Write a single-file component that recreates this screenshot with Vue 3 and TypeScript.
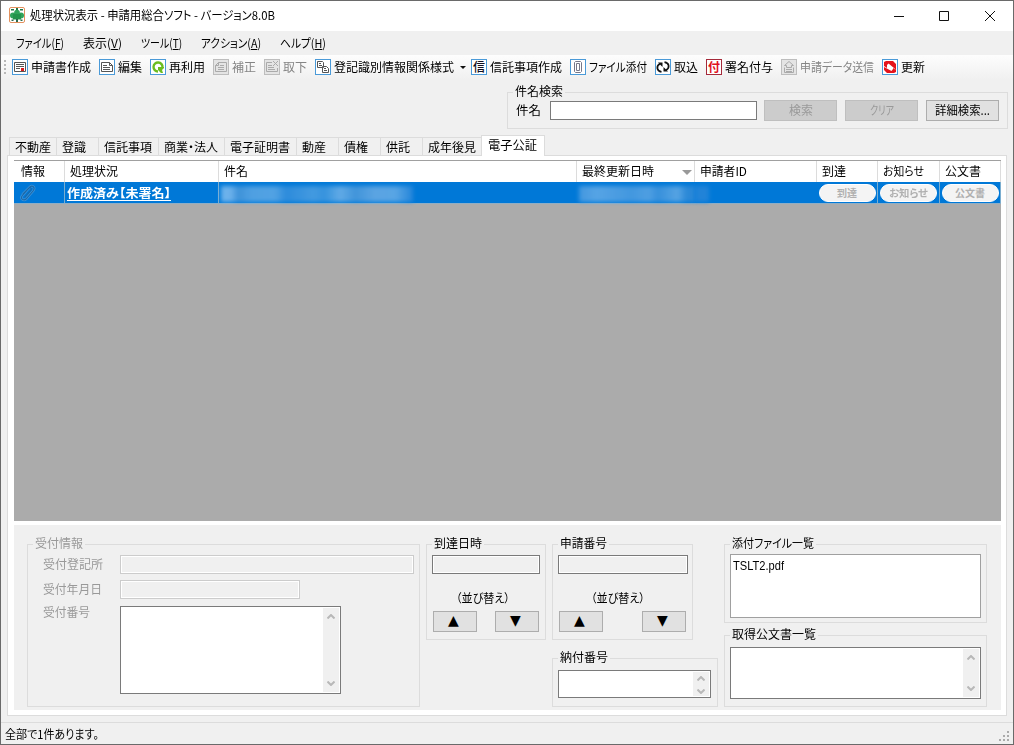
<script setup lang="ts">
interface Tool { icon: string; label: string; w: number; off?: boolean; drop?: boolean }

const fit = (el: HTMLElement, binding: { value: number }) => {
  el.style.transform = ''
  el.style.marginRight = ''
  const natural = el.getBoundingClientRect().width
  if (!natural) return
  el.style.transform = `scaleX(${binding.value / natural})`
  el.style.marginRight = `${binding.value - natural}px`
}
const vFit = { mounted: fit }

const menus = [
  { t: 'ファイル', k: 'F', w: 48 },
  { t: '表示', k: 'V', w: 39 },
  { t: 'ツール', k: 'T', w: 41 },
  { t: 'アクション', k: 'A', w: 60 },
  { t: 'ヘルプ', k: 'H', w: 46 },
]

const tools: Tool[] = [
  { icon: 'form', label: '申請書作成', w: 60 },
  { icon: 'edit', label: '編集', w: 24 },
  { icon: 'reuse', label: '再利用', w: 36 },
  { icon: 'fix', label: '補正', w: 24, off: true },
  { icon: 'withdraw', label: '取下', w: 24, off: true },
  { icon: 'copy', label: '登記識別情報関係様式', w: 120, drop: true },
  { icon: 'trust', label: '信託事項作成', w: 72 },
  { icon: 'clip', label: 'ファイル添付', w: 58 },
  { icon: 'import', label: '取込', w: 24 },
  { icon: 'sign', label: '署名付与', w: 48 },
  { icon: 'send', label: '申請データ送信', w: 74, off: true },
  { icon: 'refresh', label: '更新', w: 24 },
]

const tabs = [
  { t: '不動産', w: 36, box: 47 },
  { t: '登識', w: 24, box: 42 },
  { t: '信託事項', w: 48, box: 60 },
  { t: '商業・法人', w: 54, box: 66 },
  { t: '電子証明書', w: 60, box: 72 },
  { t: '動産', w: 24, box: 42 },
  { t: '債権', w: 24, box: 42 },
  { t: '供託', w: 24, box: 42 },
  { t: '成年後見', w: 48, box: 59 },
]

const heads = [
  { t: '情報', w: 24 }, { t: '処理状況', w: 48 }, { t: '件名', w: 24 },
  { t: '最終更新日時', w: 72, sort: true }, { t: '申請者ID', w: 47 },
  { t: '到達', w: 24 }, { t: 'お知らせ', w: 41 }, { t: '公文書', w: 36 },
]
const pills = [{ t: '到達', w: 20 }, { t: 'お知らせ', w: 39 }, { t: '公文書', w: 30 }]
</script>

<template>
  <div class="window">
    <header class="title">
      <svg class="logo" viewBox="0 0 16 16">
        <rect x=".5" y=".5" width="15" height="15" rx="1.5" fill="#fff" stroke="#e3915e" />
        <path d="M2 2h3v1.500H2zM11 2h3v1.500h-3zM7 1h2v2H7z" fill="#1d7446" />
        <circle cx="8" cy="5.500" r="2.800" fill="#2fa35a" />
        <circle cx="4" cy="8.500" r="3" fill="#2fa35a" /><circle cx="12" cy="8.500" r="3" fill="#2fa35a" />
        <path d="M4 7h8v5.500H4z" fill="#23924b" />
        <path d="M2.500 12.500h2v1.500h-2zM11.500 12.500h2v1.500h-2zM7 12h2v3H7z" fill="#2b6a4c" />
      </svg>
      <span v-fit="245" class="t">処理状況表示 - 申請用総合ソフト - バージョン8.0B</span>
      <svg class="controls" viewBox="0 0 104 14" fill="none" stroke="#111">
        <path d="M0 7.500h10M45.500 2.500h9v9h-9z" /><path d="M91 2l10 10M101 2L91 12" />
      </svg>
    </header>

    <nav class="menu">
      <span v-for="m in menus" :key="m.k" v-fit="m.w" class="t">{{ m.t }}(<u>{{ m.k }}</u>)</span>
    </nav>

    <div class="toolbar">
      <i class="grip"><b v-for="n in 4" :key="n" /></i>
      <div v-for="tool in tools" :key="tool.icon" class="tool" :class="{ off: tool.off }">
        <svg viewBox="0 0 16 16" fill="none" stroke="#555">
          <rect x=".5" y=".5" width="15" height="15" :fill="tool.off ? '#e4e4e4' : '#fff'" :stroke="tool.off ? '#bdbdbd' : tool.icon === 'sign' ? '#a52a3a' : '#4a9ad8'" />
          <template v-if="tool.icon === 'form'">
            <path d="M2.500 3.500h11v9h-11z" /><path d="M4 5.500h8M4 7.500h8M4 9.500h4" /><path d="M9 9h3v3H9z" fill="#d91c1c" stroke="none" />
          </template>
          <template v-else-if="tool.icon === 'edit'"><path d="M2.500 3.500h8l3 3v6h-11zM10.500 3.500v3h3M4 6.500h4M4 8.500h7M4 10.500h7" /></template>
          <template v-else-if="tool.icon === 'reuse'">
            <path d="M8 12.500A4.500 4.500 0 1 1 12.500 8.500" stroke="#6cbd20" stroke-width="2.400" /><path d="M8 8h6v1l-2 2 1 3H11l-3-3z" fill="#6cbd20" stroke="none" />
          </template>
          <template v-else-if="tool.icon === 'fix'"><path d="M5.500 3.500h8v9h-11v-6zM5.500 3.500v3h-3M5 8.500h6M5 10.500h6M7 6.500h4" stroke="#aaa" /></template>
          <template v-else-if="tool.icon === 'withdraw'"><path d="M8 3.500H2.500v9h11V9M4 6.500h4M4 8.500h6M4 10.500h7M9 2l5 5M14 2L9 7" stroke="#aaa" /></template>
          <template v-else-if="tool.icon === 'copy'"><path d="M2.500 2.500h5l1 1v5h-6zM4 4.500h2M4 6.500h3M7.500 7.500h4l2 2v4h-6zM9 9.500h2M9 11.500h3" fill="#fff" /></template>
          <text v-else-if="tool.icon === 'trust'" x="2" y="12.500" class="glyph">信</text>
          <template v-else-if="tool.icon === 'clip'"><path d="M4.500 5V3.500l1-1h5l1 1v9l-1 1h-5l-1-1V5M6.500 11.500V4.500h3v7h-3" stroke="#778" /></template>
          <template v-else-if="tool.icon === 'import'">
            <path d="M6.500 12.800C1.500 12 1 7 5 4.800M9.500 3.200c5 .8 5.500 5.800 1.500 8" stroke="#111" stroke-width="1.700" /><path d="M3 3.500h4.500V8zM13 12.500H8.500V8z" fill="#111" stroke="none" />
          </template>
          <text v-else-if="tool.icon === 'sign'" x="2" y="12.500" class="glyph red">付</text>
          <template v-else-if="tool.icon === 'send'"><path d="M8 2.500l4.500 4h-2v2h-5v-2h-2zM3.500 8.500v5h9v-5M5 10.500h6M5 12.500h6" stroke="#aaa" /></template>
          <template v-else>
            <path d="M2 3l2-1h7l3 3v6l-2-2-5.500-4.500L5 6v3L2 7zM14 13l-2 1H5l-3-3V8l7.500 4L11 10V9l3 2z" fill="#e5131b" stroke="none" />
          </template>
        </svg>
        <span v-fit="tool.w" class="t">{{ tool.label }}</span>
        <i v-if="tool.drop" class="drop" />
      </div>
    </div>

    <section class="search group">
      <span class="legend"><span v-fit="48" class="t">件名検索</span></span>
      <span v-fit="25" class="t">件名</span>
      <i class="field white" />
      <button class="btn dis"><span v-fit="24" class="t">検索</span></button>
      <button class="btn dis"><span v-fit="24" class="t">クリア</span></button>
      <button class="btn"><span v-fit="55" class="t">詳細検索...</span></button>
    </section>

    <div class="tabs">
      <div v-for="tab in tabs" :key="tab.t" class="tab" :style="{ width: tab.box + 'px' }"><span v-fit="tab.w" class="t">{{ tab.t }}</span></div>
      <div class="tab active"><span v-fit="49" class="t">電子公証</span></div>
    </div>

    <main class="page">
      <div class="table">
        <div class="row head">
          <div v-for="h in heads" :key="h.t"><span v-fit="h.w" class="t">{{ h.t }}</span><i v-if="h.sort" class="sort" /></div>
        </div>
        <div class="row selected">
          <div>
            <svg class="paperclip" viewBox="0 0 18 18" fill="none" stroke-linecap="round">
              <path d="M4 10l7-7c2-2 6 0 3 4l-7 8c-2 2-6 0-4-3l7-8" stroke="#3b93da" stroke-width="2.600" />
              <path d="M4 10l7-7c2-2 6 0 3 4l-7 8c-2 2-6 0-4-3l7-8c1-1 3 0 2 2l-6 7" stroke="#1b68a8" stroke-width="1.100" />
            </svg>
          </div>
          <div class="state"><span v-fit="104" class="t">作成済み【未署名】</span></div>
          <div class="veil"><i class="haze subject" /></div>
          <div class="veil"><i class="haze date" /></div>
          <div class="veil"><i class="haze tail" /></div>
          <div v-for="p in pills" :key="p.t" class="cell"><span class="pill"><span v-fit="p.w" class="t">{{ p.t }}</span></span></div>
        </div>
      </div>

      <div class="details">
        <section class="group receipt">
          <span class="legend"><span v-fit="48" class="t">受付情報</span></span>
          <span class="label"><span v-fit="60" class="t">受付登記所</span></span><i class="field faint" />
          <span class="label"><span v-fit="59" class="t">受付年月日</span></span><i class="field faint short" />
          <span class="label number"><span v-fit="47" class="t">受付番号</span></span>
          <div class="memo"><i class="bar"><svg viewBox="0 0 8 5"><path d="M.5 4.500L4 1l3.500 3.500" /></svg><svg viewBox="0 0 8 5"><path d="M.5.5L4 4 7.500.5" /></svg></i></div>
        </section>
        <section class="group order">
          <span class="legend"><span v-fit="48" class="t">到達日時</span></span>
          <i class="field" />
          <span class="caption"><span v-fit="54" class="t">（並び替え）</span></span>
          <div class="pair"><button class="btn">▲</button><button class="btn">▼</button></div>
        </section>
        <div class="col">
          <section class="group order wide">
            <span class="legend"><span v-fit="47" class="t">申請番号</span></span>
            <i class="field" />
            <span class="caption"><span v-fit="54" class="t">（並び替え）</span></span>
            <div class="pair"><button class="btn">▲</button><button class="btn">▼</button></div>
          </section>
          <section class="group pay">
            <span class="legend"><span v-fit="48" class="t">納付番号</span></span>
            <div class="memo"><i class="bar"><svg viewBox="0 0 8 5"><path d="M.5 4.500L4 1l3.500 3.500" /></svg><svg viewBox="0 0 8 5"><path d="M.5.5L4 4 7.500.5" /></svg></i></div>
          </section>
        </div>
        <div class="col last">
          <section class="group files">
            <span class="legend"><span v-fit="82" class="t">添付ファイル一覧</span></span>
            <div class="list"><span v-fit="51" class="t">TSLT2.pdf</span></div>
          </section>
          <section class="group docs">
            <span class="legend"><span v-fit="84" class="t">取得公文書一覧</span></span>
            <div class="memo"><i class="bar"><svg viewBox="0 0 8 5"><path d="M.5 4.500L4 1l3.500 3.500" /></svg><svg viewBox="0 0 8 5"><path d="M.5.5L4 4 7.500.5" /></svg></i></div>
          </section>
        </div>
      </div>
    </main>

    <footer class="status">
      <span v-fit="94" class="t">全部で1件あります。</span>
      <svg viewBox="0 0 11 11" fill="#aaa"><path d="M8 0h2v2H8zM4 4h2v2H4zM8 4h2v2H8zM0 8h2v2H0zM4 8h2v2H4zM8 8h2v2H8z" /></svg>
    </footer>
  </div>
</template>

<style>
body { margin: 0; overflow: hidden; }
</style>

<style scoped>
* { box-sizing: border-box; }
.window {
  width: 1014px; height: 745px; border: 1px solid #6a6a6a; background: #f0f0f0; color: #000;
  display: flex; flex-direction: column; font: 12px/16px "Noto Sans CJK JP", sans-serif; overflow: hidden;
}
.t { display: inline-block; flex: none; white-space: nowrap; transform-origin: 0 50%; font-feature-settings: "palt"; }
i, b { display: block; font-style: normal; }
.title { height: 30px; flex: none; background: #fff; display: flex; align-items: center; padding: 0 15px 2px 8px; }
.logo { width: 16px; height: 16px; margin-right: 5px; }
.controls { width: 104px; height: 14px; margin-left: auto; margin-top: 1px; }
.menu { height: 24px; flex: none; display: flex; align-items: center; gap: 19px; padding-left: 15px; }
.menu u { text-underline-offset: 1px; }
.toolbar { height: 25px; flex: none; display: flex; align-items: center; gap: 8px; background: linear-gradient(#fdfdfd, #f0f0f0); padding: 0 0 2px 3px; }
.grip { width: 2px; margin-right: -2px; display: grid; gap: 2px; }
.grip b { width: 2px; height: 2px; background: #b8b8b8; }
.tool { display: flex; align-items: center; gap: 3px; }
.tool svg { width: 16px; height: 16px; flex: none; }
.off { color: #858585; }
.glyph { font-size: 12px; font-weight: 500; fill: #112; stroke: none; }
.glyph.red { fill: #e01020; font-weight: 700; }
.drop { border: 3px solid transparent; border-top-color: #111; border-bottom: 0; margin: 1px -3px 0 3px; }
.group { position: relative; border: 1px solid #dcdcdc; }
.legend { position: absolute; left: 5px; top: -10px; padding: 0 2px; background: #f0f0f0; display: flex; }
.search { width: 501px; height: 37px; flex: none; margin: 12px 0 0 506px; display: flex; align-items: center; padding-left: 8px; }
.search > .t { margin-top: -2px; }
.field { height: 19px; border: 1px solid #7a7a7a; box-shadow: inset 0 0 0 1px #fff; background: #f0f0f0; }
.white { width: 207px; background: #fff; margin: 0 7px 0 9px; }
.btn { height: 21px; width: 73px; padding: 0 0 2px; border: 1px solid #adadad; background: #e1e1e1; color: #000; font: inherit; display: flex; align-items: center; justify-content: center; }
.search .btn { margin-right: 8px; flex: none; }
.search .dis { background: #ccc; border-color: #bfbfbf; color: #999; }
.tabs { display: flex; align-items: flex-end; height: 21px; flex: none; margin-top: 6px; padding-left: 8px; position: relative; z-index: 1; }
.tab { height: 18px; margin-bottom: 1px; border: 1px solid #dcdcdc; border-width: 1px 0 0 1px; display: flex; align-items: center; padding-left: 5px; flex: none; }
.active { width: 64px; height: 21px; margin: 0; border-width: 1px 1px 0; background: #fff; padding: 0 0 2px 6px; }
.page { margin: -1px 0 0 6px; width: 1000px; height: 561px; flex: none; border: 1px solid #dcdcdc; background: #fff; padding: 4px 5px 4px 6px; }
.table { height: 361px; background: #ababab; border-top: 1px solid #a0a0a0; }
.row { display: grid; grid-template-columns: 51px 154px 358px 118px 122px 61px 62px 61px; width: 987px; }
.row > div { border-right: 1px solid #dcdcdc; display: flex; align-items: center; padding-left: 5px; min-width: 0; }
.head { height: 21px; background: #fff; }
.row.head > div { padding-bottom: 2px; }
.row.head > div:first-child { padding-left: 7px; }
.sort { border: 5px solid transparent; border-top-color: #999; border-bottom: 0; margin: 4px 0 0 28px; }
.row.selected { height: 22px; background: #0078d7; border-bottom: 1px solid #8faec5; }
.row.selected > div { border-color: #7baed0; }
.paperclip { width: 18px; height: 18px; }
.row.selected .state { color: #fff; font-weight: 700; padding-left: 2px; }
.state .t { text-decoration: underline; text-underline-offset: 2px; }
.row.selected .veil { padding: 0; border: 0; }
.haze { height: 16px; margin-top: 2px; filter: blur(2px); opacity: .9; }
.subject { width: 192px; margin-left: 2px; background: linear-gradient(90deg, #78b8ee 0 5%, #4595d9 9%, #58a5e4 16%, #5ba7e5 28%, #328edc 34%, #4b9ee1 48%, #3c96de 54%, #6cb0e8 62%, #4898db 70%, #65a9e4 80%, #62aae6 91%, #2786da); }
.date { width: 116px; margin-left: 2px; background: linear-gradient(90deg, #4a9be0, #60a9e7 15%, #4a9be0 45%, #58a4e4 60%, #3d93dc 68%, #60a9e5 85%, #2f8ad8 93%, #2f8ad8); }
.tail { width: 14px; background: #2585d9; }
.row.selected .cell { padding: 0; justify-content: center; }
.pill { width: 57px; height: 18px; border-radius: 9px; background: #f4f4f4; border: 1px solid #fff; color: #b0b0b0; font-size: 10px; font-weight: 700; display: flex; align-items: center; justify-content: center; }
.details { margin-top: 4px; height: 185px; background: #f0f0f0; display: flex; gap: 6px; padding: 19px 0 0 13px; align-items: flex-start; }
.receipt { width: 393px; height: 163px; color: #999; padding: 10px 5px 0 15px; display: grid; grid-template: 19px 19px 88px / 77px 294px; gap: 6px 0; align-content: start; align-items: center; }
.label { display: flex; padding-bottom: 2px; }
.faint { border-color: #ccc; }
.short { width: 180px; }
.number { align-self: start; margin-top: -1px; }
.memo { border: 1px solid #7a7a7a; background: #fff; padding: 1px; display: flex; justify-content: flex-end; }
.receipt .memo { width: 221px; height: 88px; margin-top: 2px; }
.bar { width: 16px; background: #f0f0f0; display: flex; flex-direction: column; justify-content: space-between; align-items: center; padding: 6px 0; }
.bar svg { width: 8px; height: 5px; fill: none; stroke: #b8b8b8; stroke-width: 2; }
.order { width: 120px; height: 96px; padding: 10px 5px 0; }
.wide { width: 141px; padding-right: 4px; }
.caption { display: flex; justify-content: center; margin-top: 16px; height: 16px; padding-right: 6px; }
.wide .caption { padding-right: 10px; }
.pair { display: flex; justify-content: space-between; margin: 5px 1px 0; }
.wide .pair { margin-right: 2px; }
.pair .btn { width: 44px; padding: 0 3px 4px 0; font-family: "DejaVu Sans", sans-serif; font-size: 14px; }
.col { width: 166px; }
.pay { height: 49px; margin-top: 18px; padding: 11px 5px 0; }
.pay .memo { width: 153px; height: 28px; }
.pay .bar { padding: 4px 0 2px; }
.last { width: 263px; }
.files { height: 79px; padding: 9px 5px 0; }
.list { height: 64px; border: 1px solid #a0a0a0; background: #fff; padding: 3px 2px; font-family: "Liberation Sans", sans-serif; }
.docs { height: 72px; margin-top: 12px; padding: 11px 5px 0; }
.docs .memo { height: 52px; }
.status { margin-top: 6px; height: 22px; flex: none; border-top: 1px solid #dcdcdc; display: flex; align-items: center; justify-content: space-between; padding: 0 3px 0 4px; }
.status svg { width: 11px; height: 11px; align-self: flex-end; margin-bottom: 2px; }
</style>
